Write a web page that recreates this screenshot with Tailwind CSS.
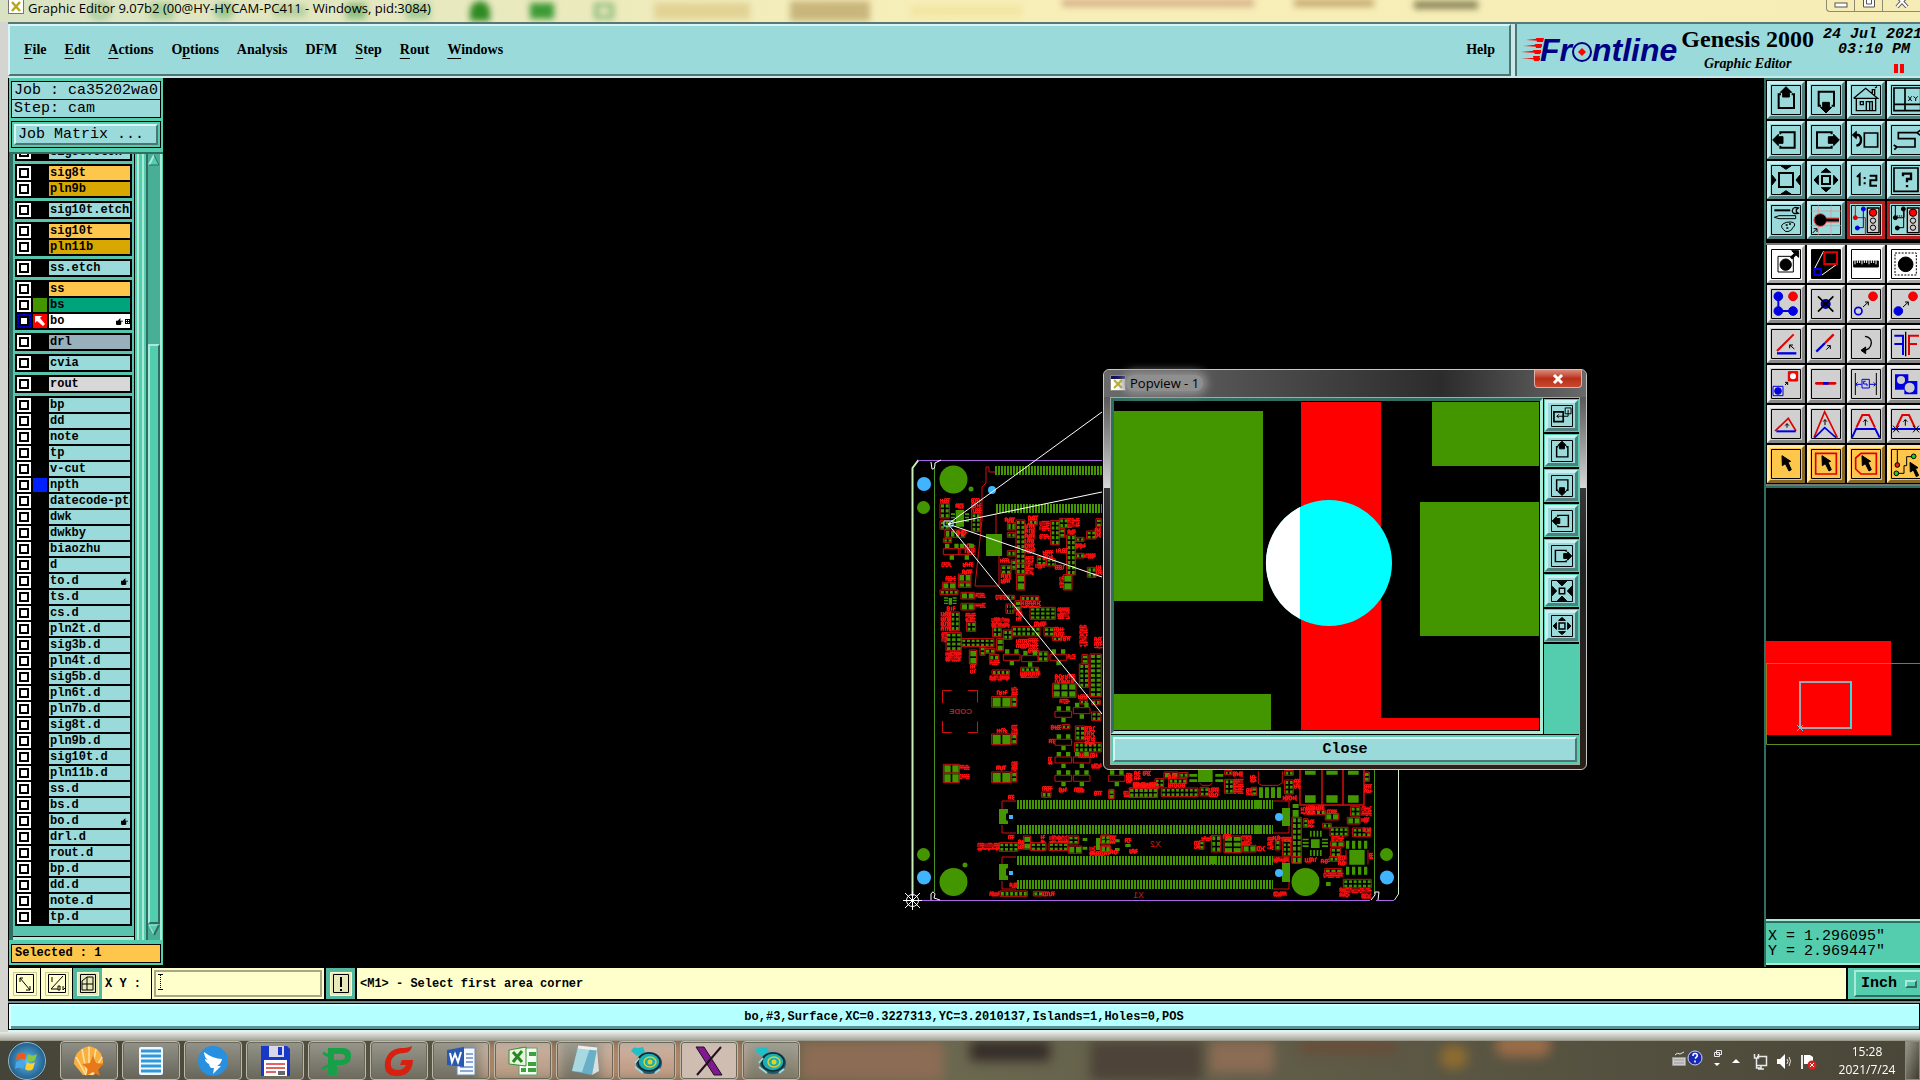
<!DOCTYPE html>
<html lang="en">
<head>
    <meta charset="UTF-8">
    <meta name="viewport" content="width=device-width, initial-scale=1.0">
    <title>Graphic Editor</title>
    <script src="https://cdn.jsdelivr.net/npm/@tailwindcss/browser@4"></script>
</head>
<body class="h-screen overflow-hidden flex flex-col bg-[#d4d4d0] text-black">

    <!-- Window title bar -->
    <div class="relative h-[22px] shrink-0 overflow-hidden bg-linear-to-r from-[#d9e3c4] via-[#f8efb8] to-[#f6edb6]">
        <div class="absolute inset-0 flex items-center gap-10 pl-[90px] blur-[3px]">
            <span class="w-5 h-4 rounded-full border-4 border-[#8fc08a]"></span>
            <span class="w-6 h-4 bg-[#a8cd98]"></span>
            <span class="w-5 h-4 rounded-full bg-[#9cc890]"></span>
            <span class="w-8 h-3 bg-[#b4d2a0]"></span>
            <span class="w-5 h-4 bg-[#8cbf80]"></span>
            <span class="w-6 h-4 bg-[#a5cc98]"></span>
            <span class="w-5 h-5 rounded-t-full bg-[#2f8a22]"></span>
            <span class="w-6 h-4 bg-[#3c9a35]"></span>
            <span class="w-5 h-4 border-4 border-[#86b877]"></span>
            <span class="w-24 h-4 bg-[#e2d294]"></span>
            <span class="w-20 h-5 bg-[#c9b67c]"></span>
            <span class="w-28 h-3 bg-[#f3e6a4]"></span>
            <span class="w-48 h-2 mb-4 bg-[#d8b48c]"></span>
            <span class="w-20 h-2 mb-4 bg-[#c8ac74]"></span>
            <span class="w-16 h-2 mb-3 bg-[#8a8458]"></span>
        </div>
        <div class="absolute left-2 top-0 flex items-start gap-1.5">
            <svg class="w-4 h-[14px]" viewBox="0 0 16 14"><path d="M0 0h16v14H0z" fill="#777"/><path d="M1 0h14v13H1z" fill="#fff"/><path d="M4 2l8 9M12 2l-8 9" stroke="#b5a818" stroke-width="2.4"/></svg>
            <span class="-ml-0.5 text-[13px] leading-4 whitespace-nowrap font-['Open_Sans',sans-serif]">Graphic Editor 9.07b2 (00@HY-HYCAM-PC411 - Windows, pid:3084)</span>
        </div>
        <div class="absolute right-0 top-0 h-3 w-[94px] flex border-l border-b border-[#8d8a70] rounded-bl text-[#555]">
            <button aria-label="Minimize" class="w-7 h-full flex justify-center border-r border-[#8d8a70]"><svg width="14" height="9" viewBox="0 0 14 9"><rect x="1" y="3" width="12" height="4" fill="#fff" stroke="#555"/></svg></button>
            <button aria-label="Restore" class="w-7 h-full flex justify-center border-r border-[#8d8a70]"><svg width="14" height="9" viewBox="0 0 14 9"><path d="M1.500-4h11v11h-11z" fill="#fff" stroke="#555"/><path d="M4.500-1h5v5h-5z" fill="none" stroke="#555"/></svg></button>
            <button aria-label="Close window" class="flex-1 h-full flex justify-center"><svg width="14" height="9" viewBox="0 0 14 9"><path d="M2-4l10 11M12-4L2 7" stroke="#555" stroke-width="4"/><path d="M2-4l10 11M12-4L2 7" stroke="#fff" stroke-width="2"/></svg></button>
        </div>
    </div>

    <main class="flex-1 min-h-0 flex flex-col ml-2 border-t-2 border-[#587878]">

        <!-- Menu bar and product header -->
        <header class="flex shrink-0 h-[54px] bg-[#c8e8ea]">
            <nav class="flex-1 flex items-center gap-[18px] px-[14px] bg-[#9bdada] border-2 border-t-[#d8f4f4] border-l-[#d8f4f4] border-b-[#4f7474] border-r-[#4f7474] mb-0.5 mr-1 text-sm font-bold font-['Liberation_Serif',serif]">
                <button><u class="underline-offset-4">F</u>ile</button>
                <button><u class="underline-offset-4">E</u>dit</button>
                <button><u class="underline-offset-4">A</u>ctions</button>
                <button>O<u class="underline-offset-4">p</u>tions</button>
                <button>Analysis</button>
                <button>DFM</button>
                <button><u class="underline-offset-4">S</u>tep</button>
                <button><u class="underline-offset-4">R</u>out</button>
                <button><u class="underline-offset-4">W</u>indows</button>
                <button class="ml-auto">Help</button>
            </nav>
            <div class="w-[405px] shrink-0 overflow-hidden flex bg-[#9bdada] border-l-2 border-[#4f7474] mb-0.5">
                <div class="flex items-center pl-1 text-[#000084] text-[32px] leading-none italic font-bold font-['Liberation_Sans',sans-serif]">
                    <svg class="w-[25px] h-6 shrink-0" viewBox="0 0 25 24"><path d="M5 2L22 0v3zM2 8L21 6v3zM0 14l20-2v3zM0 20h19v2z" fill="#f00"/><path d="M15 0h8l-1 4h-6zM14 6h7l-1 4h-5zM12 12h8l-1 4h-5zM12 18h7l-1 5h-5z" fill="#f00"/></svg>
                    <span class="-ml-1.5">Fr</span>
                    <svg class="w-5 h-6" viewBox="0 0 20 24"><circle cx="10" cy="14" r="9" fill="none" stroke="#000084" stroke-width="2"/><path d="M10 9v10M5 14h10" stroke="#9bdada"/><path d="M10 10l4 4-4 4-4-4z" fill="#f00"/></svg>
                    <span>ntline</span>
                </div>
                <div class="pl-1 pt-0.5 text-center whitespace-nowrap font-bold font-['Liberation_Serif',serif]">
                    <div class="text-2xl leading-[26px]">Genesis 2000</div>
                    <div class="text-sm leading-6 italic">Graphic Editor</div>
                </div>
                <div class="pl-1.5 pt-[3px] w-[108px] shrink-0 text-right whitespace-nowrap text-[15px] leading-[15px] italic font-bold font-['Liberation_Mono',monospace]">
                    <div>24 Jul 2021</div>
                    <div class="pr-3">03:10 PM</div>
                    <div class="flex justify-end gap-0.5 pr-[18px] pt-[7px]"><span class="w-1 h-[9px] bg-[#f00]"></span><span class="w-1 h-[9px] bg-[#f00]"></span></div>
                </div>
            </div>
        </header>

        <div class="flex-1 min-h-0 flex bg-black">

            <!-- Layer list -->
            <aside class="w-[155px] mb-0.5 shrink-0 flex flex-col bg-[#54ccae] border-l border-black font-['Liberation_Mono',monospace]">
                <div class="m-0.5 mb-0 mt-[3px] border border-black bg-black flex flex-col gap-px whitespace-nowrap text-[15px] leading-[17px]">
                    <div class="bg-[#9bdada] px-0.5">Job : ca35202wa0</div>
                    <div class="bg-[#9bdada] px-0.5">Step: cam</div>
                </div>
                <div class="mx-0.5 mt-[3px] border border-black p-0.5">
                    <button class="block w-full h-[21px] text-left px-0.5 text-[15px] leading-4 bg-[#9bdada] border-2 border-t-[#d8f4f4] border-l-[#d8f4f4] border-b-[#4f7474] border-r-[#4f7474]">Job Matrix ...</button>
                </div>
                <div class="flex-1 min-h-0 mt-1 flex border-t-2 border-[#2f6e60]">
                    <div class="w-[126px] flex flex-col justify-end overflow-hidden bg-[#58c4ad] border-l-4 border-[#2f6e60] border-r border-r-black">
                        <div id="layers" class="flex flex-col gap-[3px] ml-0.5 mr-0.5 mb-[10px] text-xs font-bold"></div>
                        <div class="h-1 shrink-0 bg-[#a8ecd8] border-t border-black"></div>
                    </div>
                    <div class="w-[11px] flex"><span class="w-0.5 bg-[#54ccae]"></span><span class="w-0.5 bg-[#a8ecd8]"></span><span class="w-[3px] bg-[#54ccae]"></span><span class="w-0.5 bg-[#a8ecd8]"></span></div>
                    <div class="w-4 flex flex-col bg-[#48ae96] border-l-2 border-r-2 border-l-[#2f6e60] border-r-[#a8ecd8]">
                        <svg class="w-3 h-3" viewBox="0 0 12 12"><path d="M6 1L1 11h10z" fill="#54ccae"/><path d="M6 1L1 11" stroke="#a8ecd8" stroke-width="2"/><path d="M6 1l5 10H1" fill="none" stroke="#2f6e60"/></svg>
                        <div class="mt-[178px] flex-1 bg-[#54ccae] border-t-2 border-l-2 border-r-2 border-b-2 border-t-[#a8ecd8] border-l-[#a8ecd8] border-r-[#2f6e60] border-b-[#2f6e60]"></div>
                        <svg class="w-3 h-3 mb-1" viewBox="0 0 12 12"><path d="M6 11L1 1h10z" fill="#54ccae"/><path d="M6 11L1 1h10" fill="none" stroke="#a8ecd8"/><path d="M6 11l5-10" stroke="#2f6e60" stroke-width="2"/></svg>
                    </div>
                </div>
                <div class="mx-0.5 mb-0.5 mt-1 border border-black bg-[#ffc64c] px-[3px] text-xs leading-[17px] font-bold">Selected : 1</div>
            </aside>

            <!-- Drawing area -->
            <section class="relative flex-1 min-w-0 overflow-hidden bg-black">
                <svg id="board" class="absolute left-0 top-0 w-[1601px] h-[888px]" viewBox="163 78 1601 888" font-family="Liberation Sans" fill="none">
                    <g stroke-width="1">
                        <path d="M912.500 896V468l6-8" stroke="#c8f0b8" stroke-width="2"/>
                        <path d="M918 460.500h184M912 900.500h458M1376 900.500h18" stroke="#a868e8"/>
                        <path d="M934.500 468v424M1374.500 770v124" stroke="#4a9020"/>
                        <path d="M1398.500 770v124l-4 6" stroke="#d8f0d0"/>
                        <path d="M931 462l1 7q3 1 3-6l6-3M931 900v-6q2-4 4 0l-1 4 6 2M1371 900l4-5v-3h4l-1 8" stroke="#fff"/>
                    </g>
                    <g fill="#449600">
                        <circle cx="923.500" cy="507.500" r="6.500"/><circle cx="953.500" cy="479.500" r="14"/><circle cx="923.500" cy="854.500" r="6.500"/><circle cx="953.500" cy="882" r="14"/>
                        <circle cx="1386.500" cy="854.500" r="6.500"/><circle cx="1305.500" cy="882" r="14"/><circle cx="971" cy="489" r="2.500"/><circle cx="965" cy="865" r="2.500"/>
                        <path d="M999 809h9v4l-2 1v6l2 1v3h-9zM999 864h9v4l-2 1v6l2 1v4h-9zM1282 808h8v18h-8v-6l-2-1v-5h2zM1282 863h8v19h-8v-6l-2-1v-5h2z"/>
                        <path d="M986 534h16v22h-16z"/>
                    </g>
                    <g fill="#40b4ff"><circle cx="924" cy="484" r="7"/><circle cx="924" cy="877.500" r="7"/><circle cx="1387" cy="877.500" r="7"/><circle cx="992" cy="490" r="4"/><path d="M1009 815h4v4h-4zM1009 871h4v4h-4z"/><circle cx="1279" cy="817" r="4"/><circle cx="1279" cy="873" r="4"/></g>
                    <g stroke="#449600" stroke-width="9" stroke-dasharray="2 1">
                        <path d="M995 470.500h107M996 508.500h106M1017 804.500h256M1017 829.500h256M1017 860.500h256M1017 884.500h256"/>
                    </g>
                    <g stroke="#d01010">
                        <path d="M995 472h-6v-5h-3v16l-4 4v33l-7 66h24v-30M996 514v20"/>
                        <path d="M1002 809v-8h14M1002 825v8h14M1002 864v-7h14M1002 881v8h14M1273 801h16v7M1273 833h16v-7M1273 857h16v6M1273 889h16v-7"/>
                        <path d="M942.500 703v-12.500h9M968 690.500h9.500v12M942.500 721v11.500h9M968 732.500h9.500v-11"/>
                        <path d="M1300 770v35h64v-35M1322 770v35M1343 770v35" stroke-width="1.500"/>
                    </g>
                    <g id="parts-left" transform="translate(900 450) scale(.3333)"></g>
                    <g id="parts-right" transform="translate(1090 760) scale(.3333)"></g>
                    <g fill="#c81818" font-size="8" font-weight="bold">
                        <text transform="translate(972 714) scale(-1 1)">CODE</text>
                        <text transform="translate(1161 847) scale(-1 1)" font-size="9" font-weight="normal">X2</text>
                        <text transform="translate(1144 898) scale(-1 1)" font-size="9" font-weight="normal">X1</text>
                    </g>
                    <g stroke="#fff"><path d="M948 524l154-112M948 524l154-32M948 524l154 53M948 524l154 190"/><path d="M944 521h9v5h-9z" stroke="#9ff"/></g>
                    <g stroke="#fff"><circle cx="912.500" cy="900.500" r="6"/><path d="M903 900.500h19M912.500 891v19M905 893l15 15M920 893l-15 15"/></g>
                </svg>

                <!-- Popview window -->
                <div class="absolute left-[940px] top-[291px] w-[484px] rounded-md border border-[#c8c8c8] bg-linear-to-b from-[#555] via-[#222] to-[#2c2018] px-1.5 pb-1">
                    <div class="absolute left-0 top-6 w-1.5 h-[94px] bg-linear-to-b from-[#555] to-[#d8d8d8]"></div>
                    <div class="absolute right-0 top-6 w-1.5 h-[94px] bg-linear-to-b from-[#555] to-[#d8d8d8]"></div>
                    <div class="relative h-[27px] -mx-1.5 px-1.5 pb-0.5 rounded-t-md flex items-center gap-1.5 bg-linear-to-r from-[#6a6a6a] via-[#2c2c2c] via-70% to-[#6a6a6a]">
                        <svg class="w-4 h-4" viewBox="0 0 16 16"><path d="M0 0h16v16H0z" fill="#888"/><path d="M1 1h14v3H1z" fill="#101060"/><path d="M1 4h14v11H1z" fill="#fff"/><path d="M4 5l8 8M12 5l-8 8" stroke="#c0b020" stroke-width="2"/></svg>
                        <span class="text-[13px] px-1 -ml-1.5 rounded-full bg-[#8f8f8f] shadow-[0_0_8px_4px_#8f8f8f] leading-4 font-['Open_Sans',sans-serif]">Popview - 1</span>
                        <button aria-label="Close popview" class="absolute right-1 top-0 w-12 h-[18px] flex items-center justify-center rounded-b border border-t-0 border-[#e0b0a8] bg-linear-to-b from-[#d88878] via-[#b83018] to-[#c84830]"><svg class="w-3 h-3" viewBox="0 0 12 12"><path d="M2 2l8 8M10 2l-8 8" stroke="#fff" stroke-width="3"/></svg></button>
                    </div>
                    <div class="border border-[#a8a8a8] bg-black">
                        <div class="flex">
                            <div class="w-[432px] border-[3px] border-t-[#2f6e60] border-l-[#2f6e60] border-b-[#a8ecd8] border-r-[#a8ecd8]">
                                <svg class="block w-full h-[330px]" viewBox="1114 401 426 330"><path d="M1114 411h149v190h-149zM1114 694h157v36h-157zM1432 402h107v64h-107zM1420 502h119v134h-119z" fill="#449600"/><path d="M1301 402h80v316h158v12h-238z" fill="#f00"/><circle cx="1329" cy="563" r="63" fill="#0ff"/><path d="M1300 507a63 63 0 0 0 0 112z" fill="#fff"/></svg>
                            </div>
                            <div id="popTools" class="w-[35px] ml-px pt-px flex flex-col gap-0.5 bg-black"></div>
                        </div>
                        <div class="mt-px p-0.5 bg-[#54ccae]">
                            <button class="block w-full h-[25px] text-[15px] leading-5 bg-[#9bdada] border-2 border-t-[#d8f4f4] border-l-[#d8f4f4] border-b-[#4f7474] border-r-[#4f7474] font-['Liberation_Mono',monospace] font-bold">Close</button>
                        </div>
                    </div>
                </div>
            </section>

            <!-- Tool palette, overview and coordinates -->
            <aside class="w-[156px] shrink-0 overflow-hidden flex flex-col bg-black border-l-2 border-[#2f6e60]">
                <div class="border-t-2 border-[#2f6e60] pl-px pt-px pb-1"><div id="viewTools" class="grid grid-cols-[38px_38px_38px_38px] gap-0.5"></div></div>
                <div class="border-t-2 border-[#777] pl-px"><div id="editTools" class="grid grid-cols-[38px_38px_38px_38px] gap-0.5"></div></div>
                <div class="mt-px h-1 shrink-0 bg-[#2f6e60] border-t-2 border-[#777]"></div>
                <svg class="flex-1 min-h-0 w-full" viewBox="1766 488 154 432" preserveAspectRatio="xMinYMin slice" fill="none">
                    <path d="M1766 641h125v94h-125z" fill="#f00"/>
                    <path d="M1925 663.500h-158.500v81h160" stroke="#5c8c28"/><path d="M1891 663.500h-125v72" stroke="#e06000"/>
                    <path d="M1800 682h51v46h-51z" stroke="#a8a8b0" stroke-width="2"/><path d="M1851 682v46" stroke="#30e0e0" stroke-width="2"/><path d="M1797 725l6 6M1803 725l-6 6" stroke="#60d0e0"/>
                </svg>
                <div class="shrink-0 h-[46px] mb-0.5 pl-0.5 pt-1 whitespace-pre bg-[#54ccae] border-y-2 border-[#a8ecd8] text-[15px] leading-[15px] font-['Liberation_Mono',monospace] shadow-[inset_0_2px_0_#2f6e60]"><div class="pt-1">X = 1.296095"</div><div>Y = 2.969447"</div></div>
            </aside>
        </div>

        <!-- Prompt line -->
        <div class="relative shrink-0 h-[34px] pt-px pb-0.5 pl-px flex bg-black text-xs font-bold font-['Liberation_Mono',monospace]">
            <button aria-label="Diagonal" class="w-[31px] mr-px flex items-center justify-center bg-[#ffffcc]"><svg class="w-6 h-6" viewBox="0 0 24 24" fill="none" stroke="#000"><path d="M.5.500h23v23H.5z" stroke="#c8c890"/><path d="M3.500 2.500h17v18h-17z"/><path d="M7 6l10 12M7 10V6h3M17 14v4h-4"/></svg></button>
            <button aria-label="Angle" class="w-[31px] mr-px flex items-center justify-center bg-[#ffffcc]"><svg class="w-6 h-6" viewBox="0 0 24 24" fill="none" stroke="#000"><path d="M.5.500h23v23H.5z" stroke="#c8c890"/><path d="M3.500 2.500h17v18h-17z"/><path d="M18 4L6 17h7M7 5v5M15 14v4h-2v-4zM18 14v4l2-2"/></svg></button>
            <button aria-label="Grid" class="w-[29px] flex items-center justify-center bg-[#54b8a0]"><svg class="w-[22px] h-6" viewBox="0 0 22 24" fill="none" stroke="#000"><path d="M.5.500h21v23H.5z" fill="#e8e8b8" stroke="#ffffcc"/><path d="M3.500 2.500h15v18h-15z"/><path d="M5 18V9l5-4h6v13zM5 12h11M10 5v13"/></svg></button>
            <label for="xy" class="w-[49px] flex items-center pl-[3px] bg-[#ffffcc] whitespace-nowrap">X Y :</label>
            <div class="relative w-[172px] ml-px flex p-0.5 bg-[#ffffcc]">
                <input id="xy" type="text" class="w-full border-2 border-[#a8a888] bg-[#ffffcc] px-1" value="">
                <svg class="absolute left-1.5 top-1.5 w-[5px] h-4 pointer-events-none" viewBox="0 0 5 16" fill="none" stroke="#000"><path d="M0 .5h5M0 15.500h5"/><path d="M2.500 1v14" stroke-dasharray="1 1"/></svg>
            </div>
            <button aria-label="Info" class="w-[29px] mx-0.5 flex items-center justify-center bg-[#54b8a0]"><svg class="w-[22px] h-6" viewBox="0 0 22 24" fill="none" stroke="#000"><path d="M.5.500h21v23H.5z" fill="#e8e8b8" stroke="#ffffcc"/><path d="M3.500 2.500h15v18h-15z"/><path d="M11 5v10M11 17v2" stroke-width="2"/></svg></button>
            <div class="flex-1 flex items-center pl-[3px] bg-[#ffffcc]">&lt;M1&gt; - Select first area corner</div>
            <div class="relative w-[72px] ml-0.5 pl-1.5 py-0.5 bg-[#54ccae]">
                <select aria-label="Units" class="appearance-none w-full h-full pl-[5px] text-[15px] font-bold bg-[#54ccae] border-2 border-r-0 border-t-[#a8ecd8] border-l-[#a8ecd8] border-b-[#2f6e60]"><option>Inch</option><option>MM</option></select>
                <span class="absolute right-[3px] top-3 w-3 h-2 border-2 border-t-[#a8ecd8] border-l-[#a8ecd8] border-b-[#2f6e60] border-r-[#2f6e60] pointer-events-none"></span>
            </div>
        </div>
        <div class="shrink-0 h-[31px] border-t-2 border-[#708c8c] pb-0.5 bg-[#d8f4f4]">
            <div class="h-[27px] border border-black bg-[#b4ffff] shadow-[inset_2px_2px_0_#d8ffff,inset_0_-3px_0_#5c9494] text-center text-xs leading-[26px] font-bold font-['Liberation_Mono',monospace]">bo,#3,Surface,XC=0.3227313,YC=3.2010137,Islands=1,Holes=0,POS</div>
        </div>
        <div class="shrink-0 h-2 -ml-2 bg-linear-to-b from-[#e8ece8] to-[#a8a89c]"></div>
    </main>

    <!-- Taskbar -->
    <footer class="relative shrink-0 h-10 flex items-center overflow-hidden border-t border-[#9a988a] bg-linear-to-r from-[#454438] via-[#6b6850] to-[#4a4638]">
        <div class="absolute inset-0 blur-[6px]">
            <span class="absolute left-[480px] top-0 w-20 h-10 bg-[#a88468]"></span>
            <span class="absolute left-[600px] top-0 w-36 h-10 bg-[#b08468]"></span>
            <span class="absolute left-[800px] top-0 w-36 h-10 bg-[#8c6c54]"></span>
            <span class="absolute left-[970px] top-0 w-20 h-5 bg-[#352c28]"></span>
            <span class="absolute left-[1090px] top-0 w-28 h-10 bg-[#4d4338]"></span>
            <span class="absolute left-[1210px] top-0 w-16 h-8 bg-[#8b6c54]"></span>
            <span class="absolute left-[1300px] top-0 w-24 h-3 bg-[#6a4c38]"></span>
            <span class="absolute left-[1440px] top-1 w-7 h-6 rounded-full bg-[#8f6c30]"></span>
            <span class="absolute left-[1495px] -top-2 w-14 h-6 rounded-full bg-[#9a6c48]"></span>
        </div>
        <button aria-label="Start" class="relative ml-2 mr-[14px] size-[38px] shrink-0 rounded-full border border-[#8bb8d0] bg-radial from-[#5cc0f0] to-[#103c68] flex items-center justify-center">
            <svg class="size-6" viewBox="0 0 24 24"><path d="M2 5q5-3 9 0l-1 6q-4-3-9 0z" fill="#f05818"/><path d="M13 5q4 3 9 0l-2 6q-4 3-8 0z" fill="#88c840"/><path d="M1 13q5-3 9 0l-2 7q-4-3-8 0z" fill="#48a8e8"/><path d="M12 13q4 3 8 0l-2 7q-4 3-8 0z" fill="#ffd030"/></svg>
        </button>
        <div id="taskButtons" class="relative flex gap-1 h-full"></div>
        <div class="relative ml-auto flex items-center h-full text-white">
            <svg class="w-[150px] h-10 mr-[7px]" viewBox="0 0 150 40" fill="none" stroke="#e8e8e8">
                <path d="M.5 16.500h13v8H.5zM2 19h10M2 22h10" fill="#ccc" stroke="#999"/><path d="M3 14q2-3 5-1l4-2"/>
                <circle cx="23" cy="17" r="7" fill="#1828b0" stroke="#c8d0f0"/><path d="M21 15q0-3 2.500-2.500t1.500 3l-2 2M23 19.500v2" stroke="#fff" stroke-width="1.600"/>
                <path d="M44.500 9.500h5v4h-5zM42.500 11.500h5v4h-5z"/><path d="M42 22h6l-3 3zM60 22h8l-4-4z" fill="#fff" stroke="none"/>
                <path d="M85 15.500h9.500v9H84M86 28h6M89 25v3M82.500 13v4h4v-4M84.500 17v10h5" stroke-width="1.500"/>
                <path d="M105 18h3l5-5v15l-5-5h-3z" fill="#fff" stroke="none"/><path d="M115 18q2 2 0 5M117 16q3 4 0 9"/>
                <path d="M130 14v14" stroke-width="2"/><path d="M132 14h6l3 2v7h-9z" fill="#fff" stroke="none"/><circle cx="140" cy="24" r="4.500" fill="#d82020" stroke="none"/><path d="M138 22l4 4M142 22l-4 4" stroke="#fff"/>
            </svg>
            <div class="w-[76px] text-center text-xs leading-[18px] font-['Open_Sans',sans-serif]"><div>15:28</div><div>2021/7/24</div></div>
            <button aria-label="Show desktop" class="w-[15px] h-full bg-linear-to-br from-[#9a988c] to-[#403c30] border border-[#8a887c]"></button>
        </div>
    </footer>

    <script>
        // Layer rows: name, label colour key, extras
        const groups = [
            [['sig8t.etch', 'teal']],
            [['sig8t', 'amber'], ['pln9b', 'gold']],
            [['sig10t.etch', 'teal']],
            [['sig10t', 'amber'], ['pln11b', 'gold']],
            [['ss.etch', 'teal']],
            [['ss', 'amber'], ['bs', 'green', 'green'], ['bo', 'white', 'work', 'hand']],
            [['drl', 'slate']],
            [['cvia', 'teal']],
            [['rout', 'light']],
            ['bp', 'dd', 'note', 'tp', 'v-cut', 'npth', 'datecode-pto', 'dwk', 'dwkby', 'biaozhu', 'd', 'to.d', 'ts.d', 'cs.d', 'pln2t.d', 'sig3b.d', 'pln4t.d', 'sig5b.d', 'pln6t.d', 'pln7b.d', 'sig8t.d', 'pln9b.d', 'sig10t.d', 'pln11b.d', 'ss.d', 'bs.d', 'bo.d', 'drl.d', 'rout.d', 'bp.d', 'dd.d', 'note.d', 'tp.d']
                .map(n => [n, 'teal', n === 'npth' ? 'blue' : '', n === 'to.d' || n === 'bo.d' ? 'hand' : ''])
        ];
        const labelBg = { teal: 'bg-[#9bdada]', amber: 'bg-[#ffc64c]', gold: 'bg-[#d8a800]', green: 'bg-[#00a47c]', white: 'bg-white', slate: 'bg-[#98b0bc]', light: 'bg-[#d8d8d8]' };
        const swatches = { green: 'bg-[#449600]', blue: 'bg-[#0020ff]', work: 'bg-[#f00]' };
        const hand = '<svg class="ml-auto mr-0.5 w-[7px] h-[7px] shrink-0" viewBox="0 0 8 8"><path d="M0 3h2l3-3v3h3v1H6v3l-1 1H1L0 7z"/></svg>';
        const grid = '<svg class="w-[5px] h-[5px] shrink-0" viewBox="0 0 5 5" shape-rendering="crispEdges"><path d="M0 0h5v5H0zM1 1v1h1V1zM3 1v1h1V1zM1 3v1h1V3zM3 3v1h1V3z" fill-rule="evenodd"/></svg>';

        document.getElementById('layers').innerHTML = groups.map(rows => `
            <div class="flex flex-col gap-0.5 p-0.5 bg-black">${rows.map(([name, bg, sw, mark]) => `
                <div class="flex h-3.5 gap-0.5">
                    <input type="checkbox" id="layer-${name}" class="appearance-none size-3.5 shrink-0 border-2 ${sw === 'work' ? 'border-[#0000c0]' : 'border-white'} bg-white shadow-[inset_0_0_0_2px_#000]">
                    <span class="w-3.5 shrink-0 ${swatches[sw] || 'bg-black'}">${sw === 'work' ? '<svg class="size-3.5" viewBox="0 0 14 14"><path d="M2 2h7L7 4l5 6-2 2-6-5-2 2z" fill="#fff"/></svg>' : ''}</span>
                    <label for="layer-${name}" class="flex-1 min-w-0 flex items-center overflow-hidden whitespace-nowrap pl-px leading-[14px] ${labelBg[bg]}">${name}${mark ? hand : ''}${sw === 'work' ? grid : ''}</label>
                </div>`).join('')}
            </div>`).join('');

        // Tool icons, drawn on a 90 unit square
        const up = '<path d="M30 28h-7v41h46V28h-7" stroke-width="6"/><path d="M45 5l17 17h-7v14H35V22h-7z" class="fill-black"/>';
        const down = '<path d="M30 62h-7V20h46v42h-7" stroke-width="6"/><path d="M45 84l17-17h-7V52H35v15h-7z" class="fill-black"/>';
        const left = '<path d="M28 28v-6h43v46H28v-6" stroke-width="6"/><path d="M5 45l17-17v7h14v20H22v7z" class="fill-black"/>';
        const right = '<path d="M62 28v-6H18v46h44v-6" stroke-width="6"/><path d="M85 45L68 28v7H52v20h16v7z" class="fill-black"/>';
        const zoomIn = '<path d="M24 24h42v42H24z" stroke-width="6"/><path d="M30 3h30L45 13zM30 87h30L45 77zM3 30v30l12-15zM87 30v30L75 45z" class="fill-black"/>';
        const zoomOut = '<path d="M33 33h24v24H33z" stroke-width="6"/><path d="M31 22h28L45 10zM31 68h28L45 80zM22 31v28L9 45zM68 31v28l13-14z" class="fill-black"/>';
        const lights = '<path d="M49 9h35v74H49z" stroke-width="4" fill="#ccc"/><circle cx="66" cy="23" r="11" fill="#f00"/><circle cx="66" cy="47" r="8"/><circle cx="66" cy="68" r="8"/>';
        const cursor = '<path d="M33 20l26 17-8 3 10 22-7 4-11-22-9 6z" class="fill-black"/>';
        const R = 'stroke="#e00000"', B = 'stroke="#0000e0"';

        const viewIcons = [
            ['Pan up', up], ['Pan down', down],
            ['Home', '<path d="M8 40l36-30 36 30H8M16 40v37h58V40M64 24V14h7v16M72 9l6-4M46 77V50h18v27M56 50v27M28 50h9v9h-9z" stroke-width="4"/>'],
            ['Window XY', '<path d="M9 9h80v68H9zM42 9v68M9 58h81" stroke-width="5"/><path d="M52 34l10 14M62 34L52 48M68 34l6 7 6-7M74 41v7"/>'],
            ['Pan left', left], ['Pan right', right],
            ['Previous view', '<path d="M40 24h40v42H40z" stroke-width="5"/><path d="M9 30h14q7 4 7 14 0 16-14 18" stroke-width="7"/><path d="M4 30l12-11v22z" class="fill-black"/>'],
            ['Serpent', '<path d="M78 23H22v18h50v25H18M8 60l10 6-8 8M90 14l-12 9 12 9" stroke-width="5"/>'],
            ['Zoom in', zoomIn], ['Zoom out', zoomOut],
            ['Scale one to two', '<path d="M18 36l8-8v34M56 32h20v14H58v16h20M41 36v6M41 52v6" stroke-width="6"/>'],
            ['Query', '<path d="M9 9h72v70H9z" stroke-width="5"/><path d="M36 34v-8h24v16H48v10M48 60v7" stroke-width="7"/>'],
            ['Setup', '<path d="M10 16h48" stroke-width="6"/><path d="M82 9q-16-5-18 7t18 9l-6-5v-6z" stroke-width="4"/><path d="M10 37l14-5h50v9H24zM38 74q-16-14 8-22 30-5 24 12-6 2-8 10-16 12-24 0" stroke-width="3"/><path d="M44 60h6M54 57h6M46 69h6" stroke-width="4"/>'],
            ['Snap', '<path d="M0 18h90M0 62h90M22 0v90M60 0v90" stroke="#e09090" stroke-width="2"/><path d="M30 45h54" stroke="#f44" stroke-width="15"/><circle cx="28" cy="45" r="19" fill="#000" stroke="#f44"/><path d="M28 45h56" stroke-width="8"/><path d="M5 84l12-12M8 71h10v10" stroke-width="3"/>'],
            ['Net red', `<path d="M13 0v38M13 38h30v52" ${R}/><path d="M37 12v56H16" ${B}/><circle cx="13" cy="38" r="6" fill="#e00000" ${R}/><circle cx="37" cy="12" r="6" fill="#0000e0" ${B}/><circle cx="19" cy="69" r="6" fill="#0000e0" ${B}/>${lights}`, 'alert'],
            ['Net compare', `<path d="M13 0v38h26V12M38 12v56H20"/><path d="M20 30v10M26 30v10M32 30v10" ${R}/><circle cx="13" cy="38" r="6" fill="#000"/><circle cx="37" cy="12" r="6" fill="#000"/><circle cx="19" cy="69" r="6" fill="#000"/>${lights}`, 'alert']
        ];
        const editIcons = [
            ['Select feature', '<path d="M21 22h46v47H21z"/><circle cx="44" cy="47" r="17" fill="#000"/><path d="M60 28l16-16" stroke-width="9"/><path d="M62 5h21v20z" class="fill-black"/>', 'white'],
            ['Popview', `<path d="M3 3h84v84H3z" class="fill-black"/><path d="M10 60L38 6M30 80l50-36" stroke="#fff"/><path d="M40 10h38v35H40z" ${R} stroke-width="6"/><path d="M10 60h20v18H10z" ${B} stroke-width="6"/>`, 'white'],
            ['Measure', '<path d="M8 36h74v18H8z" fill="#000"/><path d="M12 33v13M19 33v9M26 33v9M33 33v13M40 33v9M47 33v9M54 33v13M61 33v9M68 33v9M75 33v13" stroke="#fff"/>', 'white'],
            ['Highlight', '<path d="M12 12h64v66H12z" stroke-dasharray="6 4"/><circle cx="44" cy="46" r="22" fill="#000"/>', 'white'],
            ['Chain', `<path d="M22 22v44h44" ${B} stroke-width="6"/><circle cx="22" cy="22" r="13" fill="#0000e0" ${B}/><circle cx="22" cy="66" r="13" fill="#0000e0" ${B}/><circle cx="66" cy="66" r="13" fill="#0000e0" ${B}/><circle cx="66" cy="22" r="13" fill="#f00" ${R}/>`],
            ['Delete', '<circle cx="44" cy="45" r="15" fill="#0000a0" stroke="none"/><path d="M21 22l46 46M67 22L21 68" stroke-width="5"/>'],
            ['Move', `<circle cx="66" cy="22" r="13" fill="#f00" ${R}/><circle cx="22" cy="66" r="11" ${B} stroke-width="5"/><path d="M36 54l16-15M42 39h10v10"/>`],
            ['Copy', `<circle cx="66" cy="22" r="13" fill="#f00" ${R}/><circle cx="22" cy="66" r="13" fill="#0000e0" ${B}/><path d="M36 54l16-15M42 39h10v10"/>`],
            ['Rotate line', `<path d="M18 66l50-50" ${R} stroke-width="6"/><path d="M18 73h58" ${B} stroke-width="7"/><path d="M70 60L56 48M56 58V48h10"/>`],
            ['Split line', `<path d="M42 42l26-26" ${R} stroke-width="7"/><path d="M16 68l26-26" ${B} stroke-width="7"/><path d="M46 62l12-12M48 50h10v10"/>`],
            ['Rotate', '<path d="M42 22q20 3 19 20-2 22-26 22" stroke-width="4"/><path d="M30 64l14-10v20z" class="fill-black"/>'],
            ['Mirror', `<path d="M10 20h26v58M10 45h26" ${B} stroke-width="6"/><path d="M44 8v74" stroke-width="4"/><path d="M84 20H54v58M54 45h24" ${R} stroke-width="6"/>`],
            ['Change symbol', `<path d="M52 8h28v28H52z" fill="#f00" ${R}/><circle cx="66" cy="22" r="9" fill="#fff" stroke="none"/><path d="M6 52h30v28H6z" ${B}/><circle cx="21" cy="66" r="10" fill="#0000e0" ${B}/><path d="M42 48l8-8M42 40h8v8"/>`],
            ['Break', `<path d="M16 43h56" ${R} stroke-width="8" stroke-linecap="round"/><path d="M36 43h17" ${B} stroke-width="8"/>`],
            ['Stretch', `<path d="M13 12v66M76 12v66"/><path d="M33 31h22v26H33zM44 37h-6v8h10v6M14 46h18M56 46h18M20 40l-6 6 6 6M68 40l6 6-6 6" ${B}/>`],
            ['Merge', '<path d="M12 16h40v20h27v40H40V62H12z" fill="#0000e0" stroke="none"/><circle cx="30" cy="33" r="12" fill="#ccc" stroke="none"/><circle cx="56" cy="56" r="15" fill="#ccc" stroke="none"/>'],
            ['Corner', `<path d="M12 66l40-38 23 38" ${R} stroke-width="5"/><path d="M16 67h58" ${B} stroke-width="6"/><path d="M48 56V44M42 50l6-6 6 6"/>`],
            ['Peak', `<path d="M9 86L41 8l38 78" ${R} stroke-width="5"/><path d="M11 86l30-30 34 30" ${B} stroke-width="5"/><path d="M42 48V32M36 38l6-6 6 6"/>`],
            ['Trapezoid', `<path d="M16 56l18-38h20l18 38" ${R} stroke-width="6"/><path d="M3 86l12-26h58l13 26" ${B} stroke-width="6"/><path d="M43 50V32M37 38l6-6 6 6"/>`],
            ['Trapezoid trim', `<path d="M16 56l18-38h20l18 38" ${R} stroke-width="6"/><path d="M2 60h86" ${B} stroke-width="6"/><path d="M43 50V32M37 38l6-6 6 6M6 50l18 20M24 50L6 70M66 50l18 20M84 50L66 70"/>`],
            ['Select', cursor, 'amber'],
            ['Select in frame', `<path d="M14 13h62v62H14z" ${R} stroke-width="5"/>${cursor}`, 'amber'],
            ['Select in polygon', `<path d="M30 13h46v62H30L14 60V27z" ${R} stroke-width="5"/>${cursor}`, 'amber'],
            ['Select net', '<path d="M19 0v42M19 73h20V50h8V23h20"/><circle cx="19" cy="48" r="7" fill="#e02010"/><circle cx="68" cy="22" r="7" fill="#20d020"/><circle cx="16" cy="73" r="7" fill="#20d020"/><path d="M57 40l24 16-8 3 10 20-7 4-9-20-9 6z" class="fill-black"/>', 'amber']
        ];
        const tones = {
            teal: 'bg-[#9bdada] border-t-[#c8f0f0] border-l-[#c8f0f0] border-b-[#4f8080] border-r-[#4f8080]',
            alert: 'bg-[#9bdada] border-[#b82020]',
            white: 'bg-white border-t-white border-l-white border-b-[#a8a8a8] border-r-[#a8a8a8]',
            gray: 'bg-[#d0d0d0] border-t-[#f0f0f0] border-l-[#f0f0f0] border-b-[#888] border-r-[#888]',
            amber: 'bg-[#ffc64c] border-t-[#ffe8a8] border-l-[#ffe8a8] border-b-[#886820] border-r-[#886820]'
        };
        const tool = ([name, art, tone], base) => `
            <button aria-label="${name}" class="size-[38px] flex items-center justify-center border-[3px] ${tones[tone || base]}">
                <svg class="size-[30px]" viewBox="0 0 90 90" fill="none" stroke="#000" stroke-width="3"><path d="M1.500 1.500h87v87h-87z"/>${art}</svg>
            </button>`;
        document.getElementById('viewTools').innerHTML = viewIcons.map(i => tool(i, 'teal')).join('');
        document.getElementById('editTools').innerHTML = editIcons.map(i => tool(i, 'gray')).join('');

        const popIcons = [['Link view', '<path d="M12 28h38v40H12z" stroke-width="7"/><path d="M58 12h24v24H58zM70 20v26H24M32 38l-8 8 8 8" stroke-width="4"/>'],
            ['Up', up], ['Down', down], ['Left', left], ['Right', right],
            ['In', '<path d="M34 34h22v22H34z" stroke-width="6"/><path d="M26 5h38L45 24zM26 85h38L45 66zM5 26v38l18-19zM85 26v38L67 45z" class="fill-black"/>'],
            ['Out', zoomOut]];
        document.getElementById('popTools').innerHTML = popIcons.map(([name, art]) => `
            <div class="p-px bg-[#54ccae]"><button aria-label="${name}" class="w-full h-[31px] flex items-center justify-center border-[3px] ${tones.teal}">
                <svg class="size-[22px]" viewBox="0 0 90 90" fill="none" stroke="#000" stroke-width="4"><path d="M2 2h86v86H2z"/>${art}</svg>
            </button></div>`).join('') + '<div class="flex-1 bg-[#54ccae]"></div>';

        // Board parts: outline box with a grid of pads [x, y, w, h, cols, rows]
        let seed = 7;
        const rnd = () => (seed = (seed * 16807) % 2147483647) / 2147483647;
        function part([x, y, w, h, nx, ny]) {
            let s = `<path d="M${x} ${y}h${w}v${h}h${-w}z" stroke="#d01010" stroke-width="3"/>`;
            const cw = w / nx, ch = h / ny;
            for (let i = 0; i < nx; i++) for (let j = 0; j < ny; j++)
                s += `<rect x="${x + i * cw + 3}" y="${y + j * ch + 3}" width="${cw - 5}" height="${ch - 5}" fill="#449600"/>`;
            return s;
        }
        // Silkscreen marks too small to read
        function mark([x, y, w, h]) {
            let d = '';
            for (let a = x; a < x + w; a += 6) for (let b = y; b < y + h; b += 15) {
                const k = Math.min(12, y + h - b);
                d += `M${a} ${b}v${k}` + (rnd() > .3 ? `M${a} ${b}h5` : '') + (rnd() > .3 ? `M${a} ${b + k / 2}h6` : '') + (rnd() > .5 ? `M${a} ${b + k}h5` : '');
            }
            return `<path d="${d}" stroke="#ff1010" stroke-width="4"/>`;
        }
        const sot = ([x, y]) => `<path d="M${x - 25} ${y - 9}h50v18h-50z" stroke="#d01010" stroke-width="3"/><path d="M${x - 20} ${y - 24}h13v13h-13zM${x + 8} ${y - 24}h13v13h-13zM${x - 6} ${y + 11}h13v13h-13z" fill="#449600"/>`;
        const pads = d => `<path d="${d}" fill="#449600"/>`;

        document.getElementById('parts-left').innerHTML =
            [[120,160,28,44,2,3],[120,212,28,26,2,2],[215,190,26,54,2,4],[135,240,60,22,4,1],[130,265,25,12,2,1],[175,372,38,22,2,1],[175,397,38,15,2,1],[127,397,40,20,2,1],[120,420,54,13,4,1],[183,427,40,20,2,1],[183,460,40,20,2,1],[152,486,26,56,2,4],[200,516,27,28,2,2],[138,548,46,54,3,4],[184,566,98,24,7,2],[290,566,20,36,1,2],[208,600,22,42,1,2],[240,590,15,26,1,2],[255,596,30,14,2,1],[278,532,26,28,2,2],[268,614,28,16,2,1],[276,660,52,14,4,1],[310,540,26,28,2,2],[336,530,84,28,6,2],[362,438,54,14,4,1],[362,652,54,14,4,1],[390,472,76,36,5,3],[318,436,26,12,2,1],[303,346,30,26,2,2],[348,210,27,130,2,9],[348,340,27,32,2,2],[350,374,24,46,1,2],[386,210,26,14,2,1],[322,218,24,22,2,1],[322,248,24,14,2,1],[322,302,24,16,2,1],[334,330,14,28,1,2],[452,212,26,72,2,5],[478,205,26,28,2,2],[478,236,16,26,1,2],[500,255,26,120,2,8],[490,374,26,46,1,2],[528,262,24,12,2,1],[528,310,24,14,2,1],[560,243,28,24,2,2],[588,206,16,24,1,2],[562,352,26,30,2,2],[412,320,26,26,2,2],[440,326,26,22,2,2],[345,452,18,30,1,2],[318,462,24,28,3,2],[432,532,30,26,2,2],[458,560,26,12,2,1],[414,604,30,30,2,2],[538,642,28,70,2,5],[570,612,34,128,2,9],[546,614,18,26,1,2],[458,700,70,42,3,2],[540,750,22,12,2,1],[575,750,26,14,2,1],[575,786,28,26,2,2],[526,828,28,42,2,3],[524,878,80,28,6,2],[486,824,24,12,2,1],[425,1026,28,16,2,1],[688,1014,85,28,6,2],[626,1020,15,26,1,2],[275,740,58,32,2,1],[334,740,16,30,1,2],[275,852,58,32,2,1],[334,852,16,30,1,2],[275,966,58,32,2,1],[334,966,16,30,1,2],[130,943,48,26,2,1],[130,970,48,28,2,1],[298,1178,56,26,4,2],[370,1158,22,40,1,2],[392,1178,46,24,3,2],[447,1178,56,24,4,2],[505,1158,30,24,2,2],[505,1188,40,22,2,1],[603,1155,28,24,2,2],[603,1186,28,20,2,1],[300,1323,82,16,6,1],[400,1324,28,14,2,1]].map(part).join('') +
            [[122,146,28,14],[168,162,22,14],[215,146,30,42],[172,242,30,14],[196,282,30,30],[126,338,26,12],[190,338,26,14],[188,360,26,12],[138,380,28,12],[228,430,30,14],[228,460,30,14],[142,470,22,14],[124,486,28,56],[198,490,28,24],[126,548,14,28],[138,606,48,30],[212,644,14,26],[276,504,52,28],[270,632,26,12],[270,678,60,12],[316,204,26,12],[376,222,28,88],[378,320,20,54],[304,372,28,28],[302,326,28,12],[386,198,30,12],[420,214,30,30],[420,254,30,14],[430,302,26,24],[408,342,30,14],[504,206,34,26],[504,240,20,14],[528,282,28,14],[552,312,32,14],[470,296,32,14],[466,346,30,14],[480,380,12,32],[586,234,16,28],[590,346,14,28],[288,436,28,14],[364,454,56,18],[350,486,16,26],[474,474,34,32],[404,516,34,14],[464,532,30,26],[484,560,28,12],[386,566,28,44],[350,568,34,26],[540,526,22,62],[584,562,20,32],[504,614,24,14],[362,666,58,16],[466,674,60,24],[292,722,30,14],[336,712,16,28],[336,826,16,26],[336,936,16,26],[292,836,26,14],[290,948,28,14],[180,946,30,14],[180,974,30,14],[480,748,26,12],[536,734,26,14],[454,826,28,12],[556,830,28,52],[448,868,14,14],[446,922,10,20],[428,1010,26,14],[478,1014,24,12],[524,1014,30,12],[584,1024,24,14],[700,998,78,16],[672,1024,16,16],[680,970,16,24],[704,964,14,28],[326,1036,18,12],[326,1156,18,12],[330,1300,24,12],[234,1180,64,20],[450,1158,54,18],[356,1170,16,26],[424,1156,12,22],[572,1204,60,12],[690,1198,20,12],[270,1326,30,14],[430,1326,32,14],[536,910,60,14]].map(mark).join('') +
            [[490,793],[545,782],[490,877],[490,930],[545,930],[490,985],[545,985],[650,985],[335,622],[390,626],[475,622],[155,305],[200,305]].map(sot).join('') +
            pads('M167 180h25v50h-25zM153 190h12v5h-12zM153 200h12v5h-12zM153 210h12v5h-12zM195 190h12v5h-12zM195 200h12v5h-12zM195 210h12v5h-12zM146 444h10v20h-10zM132 442h12v4h-12zM132 450h12v4h-12zM132 458h12v4h-12zM158 442h12v4h-12zM158 450h12v4h-12zM158 458h12v4h-12zM548 1164h14v9h-14zM588 1164h12v36h-12zM548 1190h14v9h-14zM645 1168h14v9h-14zM645 1194h14v9h-14zM676 1182h16v9h-16z');

        document.getElementById('parts-right').innerHTML =
            [[118,84,84,28,6,2],[214,84,110,26,8,2],[330,82,26,26,2,2],[58,88,14,28,1,2],[195,56,26,24,2,2],[222,36,42,18,2,1],[236,56,54,14,4,1],[268,38,26,14,2,1],[404,58,26,42,2,3],[404,32,22,12,2,1],[484,82,16,24,1,2],[584,60,26,42,2,3],[584,32,26,14,2,1],[822,36,16,28,1,2],[606,172,28,136,2,8],[640,176,14,26,1,2],[650,150,56,14,4,1],[706,160,40,20,2,1],[782,140,28,28,2,2],[772,172,38,20,2,1],[698,190,26,14,2,1],[720,202,54,26,4,2],[788,204,54,26,4,2],[722,244,40,16,2,1],[722,264,30,26,2,2],[718,290,26,14,2,1],[704,326,52,12,3,1],[760,358,84,26,6,2],[578,234,24,54,2,4],[556,240,14,30,1,2],[364,226,28,50,2,3],[328,242,14,26,1,2],[402,228,52,50,2,3],[458,256,40,20,2,1],[32,228,28,24,2,2],[32,260,28,16,2,1],[606,290,28,20,2,1]].map(part).join('') +
            [[6,12,28,12],[134,70,62,12],[236,70,54,14],[236,44,20,12],[110,42,14,26],[160,34,24,12],[358,84,30,26],[432,58,30,44],[430,36,30,12],[482,46,14,20],[470,86,14,20],[580,108,40,14],[614,58,14,28],[824,74,24,24],[634,142,40,20],[650,138,54,12],[656,180,16,22],[712,150,28,10],[816,140,28,30],[816,174,24,12],[726,230,34,12],[820,204,24,14],[746,288,20,28],[646,294,32,12],[694,298,20,14],[702,340,58,12],[750,384,30,28],[780,386,64,14],[816,402,28,12],[534,232,14,36],[550,228,20,12],[576,232,26,14],[552,294,46,14],[552,396,42,14],[336,230,30,14],[314,244,16,22],[400,224,24,12],[456,228,26,26],[502,260,24,12],[62,228,18,24],[62,270,20,14],[0,260,18,26],[120,268,22,12],[106,236,18,14],[838,280,10,16]].map(mark).join('') +
            pads('M324 30h44v36h-44zM298 42h24v8h-24zM298 58h24v8h-24zM376 42h24v8h-24zM376 58h24v8h-24zM507 82h12v32h-12zM525 82h12v32h-12zM543 82h12v32h-12zM561 82h12v32h-12zM645 106h32v22h-32zM709 106h34v22h-34zM774 106h32v22h-32zM645 32h32v12h-32zM709 32h34v12h-34zM774 32h32v12h-32zM608 132h18v12h-18zM608 150h18v20h-18zM663 238h26v26h-26zM660 212h5v18h-5zM670 212h5v18h-5zM680 212h5v18h-5zM690 212h5v18h-5zM660 270h5v18h-5zM670 270h5v18h-5zM680 270h5v18h-5zM690 270h5v18h-5zM638 236h18v5h-18zM638 246h18v5h-18zM638 256h18v5h-18zM696 236h18v5h-18zM696 246h18v5h-18zM696 256h18v5h-18zM778 270h46v44h-46zM768 242h10v24h-10zM786 242h10v24h-10zM804 242h10v24h-10zM822 242h10v24h-10zM768 320h10v24h-10zM786 320h10v24h-10zM804 320h10v24h-10zM822 320h10v24h-10zM708 366h14v12h-14zM492 120h18v26h-18zM492 196h18v26h-18zM360 288h18v24h-18z') +
            '<path d="M505 34v36l10 6h50l12-8V34M768 270v44M834 270v44M328 68l8 8h24l8-8" stroke="#d01010" stroke-width="3"/>';

        // Taskbar buttons
        const bee = '<path d="M0 6q2-5 7-3l5-1 2 5-8 4z" fill="#20c0c8"/><ellipse cx="18" cy="18" rx="13" ry="11" fill="#205870"/><ellipse cx="18" cy="17" rx="11" ry="9" fill="#18b0b0" stroke="#102838" stroke-width="1.500"/><ellipse cx="19" cy="17" rx="6" ry="5" fill="none" stroke="#e0d030" stroke-width="1.500"/><circle cx="19" cy="17" r="2.500" fill="#e0d030"/><path d="M4 22l8 6M8 13l-4 5M24 28l5-4" stroke="#a0d8d0" stroke-width="2"/>';
        const tasks = [
            ['Shell', '<path d="M16 1q14 3 14 17l-9 12H10L1 19Q1 5 16 1z" fill="#f8b040"/><path d="M16 2v28M9 4l5 26M23 4l-5 26M3 12l10 18M29 12L19 30" stroke="#ffe0a0" stroke-width="1.500"/><path d="M20 10l3 8 8 1-6 5 2 7-7-4-7 4 2-7-6-5 8-1z" fill="#e87818"/>'],
            ['Notes', '<rect x="4" y="2" width="24" height="28" rx="2" fill="#f0f8ff"/><path d="M6 6h20M6 11h20M6 16h20M6 21h20M6 26h20" stroke="#3098d8" stroke-width="3"/>'],
            ['DingTalk', '<circle cx="16" cy="16" r="15" fill="#2890e0"/><path d="M7 7q9 7 18 7-1 5-5 7h4l-8 8 1-6h-3q-2-2-2-4-4-2-4-5l3 1Q7 12 7 7z" fill="#fff"/>'],
            ['Floppy', '<path d="M2 1h26l3 3v27H2z" fill="#1838c8"/><path d="M10 1h15v11H10z" fill="#d8d8e8"/><path d="M19 2h4v8h-4z" fill="#1838c8"/><path d="M5 15h23v16H5z" fill="#fff"/><path d="M7 19h19M7 23h19M7 27h10" stroke="#d83030" stroke-width="1.500"/><path d="M19 26h7v4h-7z" fill="#666"/>'],
            ['Pads', '<path d="M7 3h15q8 0 8 8t-8 9h-6v11H7zM13 9v6h7q4 0 4-3t-4-3z" fill="#18a048" fill-rule="evenodd"/><path d="M2 8l6 3M1 24l8-4" stroke="#18a048" stroke-width="3"/>'],
            ['Genesis', '<path d="M29 1q-1 7-8 7-10 0-13 8-2 9 7 9 6 0 8-5h-6l2-5h11q-1 16-16 16Q0 31 2 17 5 4 18 3q7 0 11-2z" fill="#d82010"/>'],
            ['Word', '<path d="M12 3h18v27H12z" fill="#f4f8ff" stroke="#7088b0"/><path d="M21 9h7M21 13h7M21 17h7M15 22h13M15 26h13" stroke="#2858a8"/><path d="M2 5l17-3v20L2 20z" fill="#2858b0"/><path d="M5 8l2 9 3-8 3 8 3-10" fill="none" stroke="#fff" stroke-width="2"/>'],
            ['Excel', '<path d="M12 3h18v27H12z" fill="#f4fff4" stroke="#60a060"/><path d="M14 17h5v4h-5zM21 17h8v4h-8zM14 23h5v4h-5zM21 23h8v4h-8zM22 7h7v4h-7z" fill="#40a040"/><path d="M2 5l17-3v19L2 19z" fill="#e8f4e0" stroke="#389030"/><path d="M6 7l9 10M15 6L6 17" stroke="#288820" stroke-width="3"/>'],
            ['Notepad', '<path d="M9 2l19 2-5 26-20-4z" fill="#68b0c8"/><path d="M9 2l12 1-8 24-10-1z" fill="#a8d8e0"/><path d="M28 4l2 22-7 4z" fill="#d8e0e0"/><path d="M9 2l19 2" stroke="#eee" stroke-width="3"/>'],
            ['InCAM', bee],
            ['Exceed', '<path d="M3 2h8l18 28h-8z" fill="#801890" stroke="#201020"/><path d="M28 2L4 30" stroke="#201020" stroke-width="2"/>', 'bg-[#d8ccc4]/80'],
            ['InCAM 2', bee]
        ];
        document.getElementById('taskButtons').innerHTML = tasks.map(([name, art, bg]) => `
            <button aria-label="${name}" class="w-[58px] h-full flex items-center justify-center rounded border border-[#bcb9a8] shadow-[inset_0_0_0_1px_#6a6858] ${bg || 'bg-linear-to-b from-white/40 to-white/15'}">
                <svg class="size-8" viewBox="0 0 32 32" fill="none">${art}</svg>
            </button>`).join('');
    </script>
</body>
</html>
